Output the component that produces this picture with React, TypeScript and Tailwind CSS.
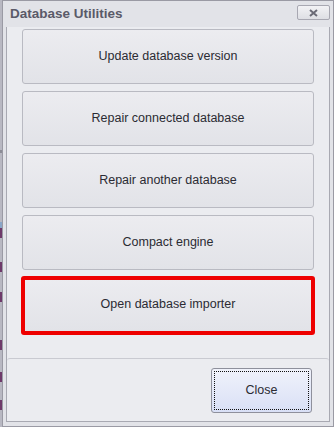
import React from "react";

const font = { fontFamily: '"Liberation Sans", Arial, sans-serif' };

function Btn({ label }: { label: string }) {
  return (
    <div className="h-[55px] rounded-[3px] border border-[#b9bac2] bg-gradient-to-b from-[#ececf0] to-[#e2e3e8] flex items-center justify-center text-[12.5px] text-[#2b2b33]">
      {label}
    </div>
  );
}

export default function App() {
  const marks = [228, 262, 292, 340, 372, 400];
  return (
    <div className="w-[334px] h-[427px] flex bg-[#c4c4cc] overflow-hidden" style={font}>
      <div className="w-[2px] h-full relative bg-[#b8b8c2]">
        <div className="absolute left-0 top-[150px] w-[2px] h-[3px] bg-[#8c8c96]" />
        <div className="absolute left-0 top-[222px] w-[2px] h-[6px] bg-[#8aa6c8]" />
        {marks.map((m) => (
          <div key={m} className="absolute left-0 w-[2px] h-[10px] bg-[#6e3a6a]" style={{ top: m }} />
        ))}
      </div>
      <div className="flex-1 flex flex-col border border-[#9a9aa4] bg-[#e2e3e8] pb-[4px]">
        <div className="h-[26px] flex items-center justify-between pl-[7px] pr-[3px]">
          <span className="text-[13.5px] font-bold text-[#5a5a68]">Database Utilities</span>
          <div className="w-[33px] h-[15px] mt-[-3px] rounded-[2px] border border-[#a8a8b2] bg-gradient-to-b from-[#f2f2f5] to-[#dedfe4] flex items-center justify-center">
            <svg width="9" height="8" viewBox="0 0 9 8">
              <path d="M1 1 L8 7 M8 1 L1 7" stroke="#6a6a76" strokeWidth="2" />
            </svg>
          </div>
        </div>
        <div className="flex-1 mx-[3px] border border-t-0 border-[#a8a9b2] bg-[#ebecf0] flex flex-col">
          <div className="flex-1 flex flex-col gap-[7px] pl-[15px] pr-[15px] pt-[2px]">
            <Btn label="Update database version" />
            <Btn label="Repair connected database" />
            <Btn label="Repair another database" />
            <Btn label="Compact engine" />
            <div className="relative">
              <Btn label="Open database importer" />
              <div className="absolute left-[-1px] right-[-1px] top-[-1px] bottom-[-3px] rounded-[3px] border-[4px] border-[#ee0000]" />
            </div>
          </div>
          <div className="h-[63px] rounded-t-[3px] border-t border-[#c9cad1] flex items-start justify-end pr-[17px] pt-[9px]">
            <div className="w-[101px] h-[45px] rounded-[3px] border border-[#8e909c] bg-gradient-to-b from-[#f0f2fb] to-[#d9e0f6] p-[2px]">
              <div className="w-full h-full border border-dotted border-[#111] flex items-center justify-center text-[12.5px] text-[#2b2b33]">
                Close
              </div>
            </div>
          </div>
        </div>
      </div>
    </div>
  );
}
